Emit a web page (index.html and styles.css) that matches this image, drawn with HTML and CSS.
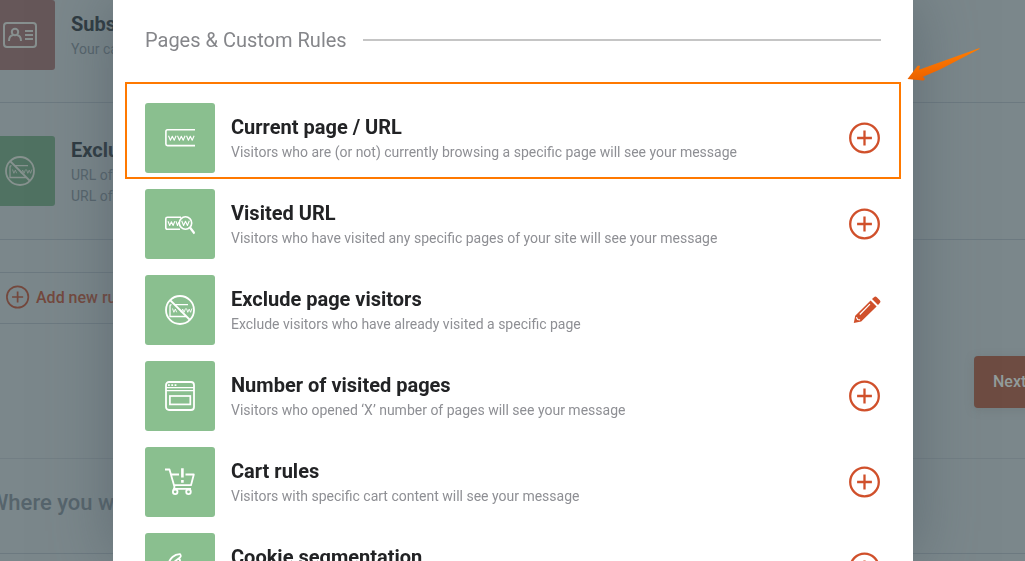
FILE: index.html
```html
<!DOCTYPE html>
<html lang="en">
<head>
<meta charset="utf-8">
<title>Pages &amp; Custom Rules</title>
<link rel="stylesheet" href="styles.css">
</head>
<body>
<svg class="defs" aria-hidden="true">
  <symbol id="plus" viewBox="0 0 32 32"><g fill="none" stroke="currentColor" stroke-width="2.3"><circle cx="15.5" cy="16" r="14.3"/><path d="M15.5 8.6v14.8M8.1 16h14.8"/></g></symbol>
  <symbol id="www" viewBox="0 0 30 30"><g fill="none" stroke="currentColor" stroke-width="1.6" stroke-linejoin="round"><path d="M30 6.8H2.5q-1.6 0-1.6 1.6v12.6q0 1.6 1.6 1.6H30"/><path stroke-width="1.1" d="M3.5 12.8l1.9 4.4 1.9-4 1.9 4 1.9-4.4M12.5 12.8l1.9 4.4 1.9-4 1.9 4 1.9-4.4M21.5 12.8l1.9 4.4 1.9-4 1.9 4 1.9-4.4"/></g></symbol>
  <symbol id="visited" viewBox="0 0 30 30"><g fill="none" stroke="currentColor" stroke-width="1.6" stroke-linejoin="round"><path d="M15 20.3H2.4q-1.6 0-1.6-1.6V9.8q0-1.6 1.6-1.6H16"/><circle cx="20.5" cy="14" r="6.2"/><path stroke-width="2.2" d="M25 18.5l4.5 6"/><path stroke-width="1.1" d="M3 12.2l1.7 4.3 1.7-3.8 1.7 3.8 1.7-4.3M11 12.2l1.5 4.3 1.5-3.6M16.7 11.8l1.9 4.7 1.9-4.2 1.9 4.2 1.9-4.7"/></g></symbol>
  <symbol id="exclude" viewBox="0 0 30 30"><g fill="none" stroke="currentColor" stroke-width="1.8"><circle cx="15" cy="15" r="14"/><path d="M5 5l20 20"/><path stroke-width="1.3" d="M10 9.7h13M6.5 9.7q-1.5 0-1.5 1.3v10.5h16"/><path stroke-width=".9" d="M7.5 13.5l1.4 3.8 1.4-3.2 1.4 3.2M15 14.5l1.3 2.8 1.4-3.2 1.4 3.2 1.4-3.8M21.5 13.5l1.3 3.8 1.4-3.2 1.4 3.2 1.3-3.8"/></g></symbol>
  <symbol id="browser" viewBox="0 0 30 30"><g fill="none" stroke="currentColor" stroke-width="1.8"><rect x="1" y="1" width="28" height="28" rx="3"/><path d="M1 6.6h28M1 9.6h28" stroke-width="1.2"/><path stroke-width="1.8" d="M3 4.2h1.8M6.3 4.2h1.8M9.6 4.2h1.8"/><rect x="4.9" y="15" width="20.4" height="8.4" stroke-width="1.7"/></g></symbol>
  <symbol id="cart" viewBox="0 0 30 30"><g fill="none" stroke="currentColor" stroke-width="1.8" stroke-linejoin="round"><path d="M0 2.5h4.5L9.5 20l-1 3M6 7.5h8M20.5 7.5h8.3L26 18.2H9M9 21.8h17"/><circle cx="10.2" cy="24.8" r="2.3"/><circle cx="23.5" cy="24.8" r="2.3"/><path stroke-width="2.6" d="M17.4 1.3V10.5M17.4 13v2.8"/></g></symbol>
  <symbol id="cookie" viewBox="0 0 30 30"><g fill="none" stroke="currentColor" stroke-width="1.8"><path d="M3 13C4 5 10 1 15 1.2q2 2-1 4Q10 8 8 10M13.5 5q2.5 2 1 5"/></g></symbol>
  <symbol id="card" viewBox="0 0 34 26"><g fill="none" stroke="currentColor" stroke-width="2"><rect x="1" y="1" width="32" height="24" rx="3"/><path d="M22 9h8M22 13h8M22 17h8"/><circle cx="12" cy="10" r="3.2"/><path d="M6 19q0-5.5 4.3-6M18 19q0-5.5-4.3-6"/></g></symbol>
  <symbol id="pencil" viewBox="0 0 28 28"><path fill="currentColor" d="M17.6 4.5l6 5.9L8.2 25.6.8 27l1.4-7.2zM19 3.1l2-1.9q1.4-1.2 2.8 0l3 3q1.3 1.4 0 2.8L25 8.9z"/><path fill="none" stroke="#fff" stroke-width="1.2" d="M6.8 18.5L17 8.2M3.4 21.2l1.2 2.3 2.5.3"/></symbol>
</svg>

<main class="page">
  <section class="rule">
    <div class="rule-tile red"><svg class="card-icon"><use href="#card"/></svg></div>
    <div class="text"><h2>Subs</h2><p>Your ca</p></div>
  </section>
  <section class="rule tall">
    <div class="rule-tile"><svg class="icon"><use href="#exclude"/></svg></div>
    <div class="text"><h2>Exclu</h2><p>URL of<br>URL of</p></div>
  </section>
  <button class="new-rule" type="button"><svg class="small-plus"><use href="#plus"/></svg>Add new rule</button>
  <div class="actions"><button class="next" type="button">Next</button></div>
  <section class="where"><h2>Where you w</h2></section>
</main>

<div class="overlay">
  <div class="modal" role="dialog" aria-labelledby="group">
    <header class="group"><h1 id="group">Pages &amp; Custom Rules</h1><span class="line"></span></header>
    <ul class="list">
      <li class="item selected"><div class="tile"><svg class="icon"><use href="#www"/></svg></div><div class="text"><h2>Current page / URL</h2><p>Visitors who are (or not) currently browsing a specific page will see your message</p></div><button class="act" type="button" aria-label="Add Current page / URL"><svg class="plus"><use href="#plus"/></svg></button></li>
      <li class="item"><div class="tile"><svg class="icon"><use href="#visited"/></svg></div><div class="text"><h2>Visited URL</h2><p>Visitors who have visited any specific pages of your site will see your message</p></div><button class="act" type="button" aria-label="Add Visited URL"><svg class="plus"><use href="#plus"/></svg></button></li>
      <li class="item"><div class="tile"><svg class="icon"><use href="#exclude"/></svg></div><div class="text"><h2>Exclude page visitors</h2><p>Exclude visitors who have already visited a specific page</p></div><button class="act" type="button" aria-label="Edit Exclude page visitors"><svg class="pencil"><use href="#pencil"/></svg></button></li>
      <li class="item"><div class="tile"><svg class="icon"><use href="#browser"/></svg></div><div class="text"><h2>Number of visited pages</h2><p>Visitors who opened ‘X’ number of pages will see your message</p></div><button class="act" type="button" aria-label="Add Number of visited pages"><svg class="plus"><use href="#plus"/></svg></button></li>
      <li class="item"><div class="tile"><svg class="icon"><use href="#cart"/></svg></div><div class="text"><h2>Cart rules</h2><p>Visitors with specific cart content will see your message</p></div><button class="act" type="button" aria-label="Add Cart rules"><svg class="plus"><use href="#plus"/></svg></button></li>
      <li class="item"><div class="tile"><svg class="icon"><use href="#cookie"/></svg></div><div class="text"><h2>Cookie segmentation</h2></div><button class="act" type="button" aria-label="Add Cookie segmentation"><svg class="plus"><use href="#plus"/></svg></button></li>
    </ul>
    <svg class="arrow" viewBox="0 0 76 36" aria-hidden="true">
      <defs><linearGradient id="flame" x1="0" y1="0" x2=".25" y2="1"><stop offset=".3" stop-color="#ff7a00"/><stop offset="1" stop-color="#e95f00"/></linearGradient></defs>
      <path fill="url(#flame)" d="M.5 32L10.5 19q2-1.4 2.5.5l-1 3.3L72 1.3q1-.2.4.7L33 22.5 15.5 30l2 1q.8 2-1.5 2.6z"/>
    </svg>
  </div>
</div>
</body>
</html>
```

FILE: styles.css
```css
* { box-sizing: border-box; }
html, body { height: 100%; }
body { margin: 0; overflow: hidden; background: #7b878b; font-family: Roboto, "Liberation Sans", sans-serif; }
h1, h2, p, ul { margin: 0; padding: 0; }
button { font: inherit; border: 0; background: none; padding: 0; cursor: pointer; }
svg { display: block; flex: none; }
.defs { display: none; }
.text { flex: 1; min-width: 0; }
.text h2 { font-size: 20px; line-height: 28px; font-weight: 700; color: #222325; }
.text p { font-size: 14px; line-height: 22px; color: #8e8f94; }
.icon { width: 30px; height: 30px; }

/* Page behind the dialog */
.page { overflow: hidden; height: 100%; color: #56646c; }
.rule { display: flex; gap: 16px; margin-left: -15px; padding-bottom: 32px; border-bottom: 1px solid #6c7980; }
.rule.tall { padding-top: 33px; padding-bottom: 32px; }
.rule .text { padding-top: 10px; white-space: nowrap; }
.rule.tall .text { padding-top: 0; }
.rule .text h2 { color: #2e3a41; }
.rule .text p { padding-top: 1px; color: #56646c; line-height: 21px; }
.rule-tile { display: flex; align-items: center; width: 70px; height: 70px; padding-left: 20px; border-radius: 3px; background: #507262; color: #87928f; flex: none; }
.rule-tile.red { background: #665759; color: #87908f; padding-left: 18px; }
.card-icon { width: 34px; height: 26px; }
.new-rule { display: flex; align-items: center; gap: 6px; width: 280px; height: 52px; margin: 32px 0 0 -15px; padding: 0 0 2px 20px; border: 1px solid #6c7980; border-radius: 3px; color: #74483d; font-size: 16px; font-weight: 500; }
.small-plus { width: 24px; height: 24px; }
.actions { display: flex; justify-content: flex-end; margin-top: 32px; padding-bottom: 50px; border-bottom: 1px solid #727e84; }
.next { width: 131px; height: 52px; margin-right: -80px; padding: 0 0 2px 19px; border-radius: 4px; background: #6e4c42; color: #929c9b; font-size: 16px; font-weight: 500; text-align: left; box-shadow: 0 2px 8px #66707066; }
.where { padding: 30px 0 36px; border-bottom: 1px solid #6c7980; }
.where h2 { margin-left: -11px; font-size: 22px; line-height: 28px; font-weight: 500; }

/* Dialog */
.overlay { position: fixed; inset: 0; display: flex; justify-content: center; padding-left: 1px; }
.modal { position: relative; width: 800px; min-height: 100%; padding: 28px 32px 0; background: #fff; box-shadow: 0 0 60px #48545d88; }
.group { display: flex; align-items: center; gap: 16px; margin-bottom: 51px; }
.group h1 { font-size: 20px; line-height: 24px; font-weight: 400; color: #85868a; }
.line { flex: 1; height: 2px; background: #c5c5c5; }
.list { display: grid; gap: 16px; list-style: none; }
.item { position: relative; display: flex; align-items: center; gap: 16px; }
.item:last-child .text { padding-bottom: 22px; }
.tile { display: grid; place-items: center; width: 70px; height: 70px; border-radius: 3px; background: #8abf8f; color: #fff; flex: none; }
.selected::after { content: ""; position: absolute; inset: -21px -20px -6px; border: 2px solid #ff7900; pointer-events: none; }
.act { display: grid; place-items: center end; width: 32px; height: 32px; color: #d0502b; }
.plus { width: 32px; height: 32px; }
.pencil { width: 28px; height: 28px; }
.arrow { position: absolute; top: 47px; right: -70px; width: 76px; height: 36px; }
```
